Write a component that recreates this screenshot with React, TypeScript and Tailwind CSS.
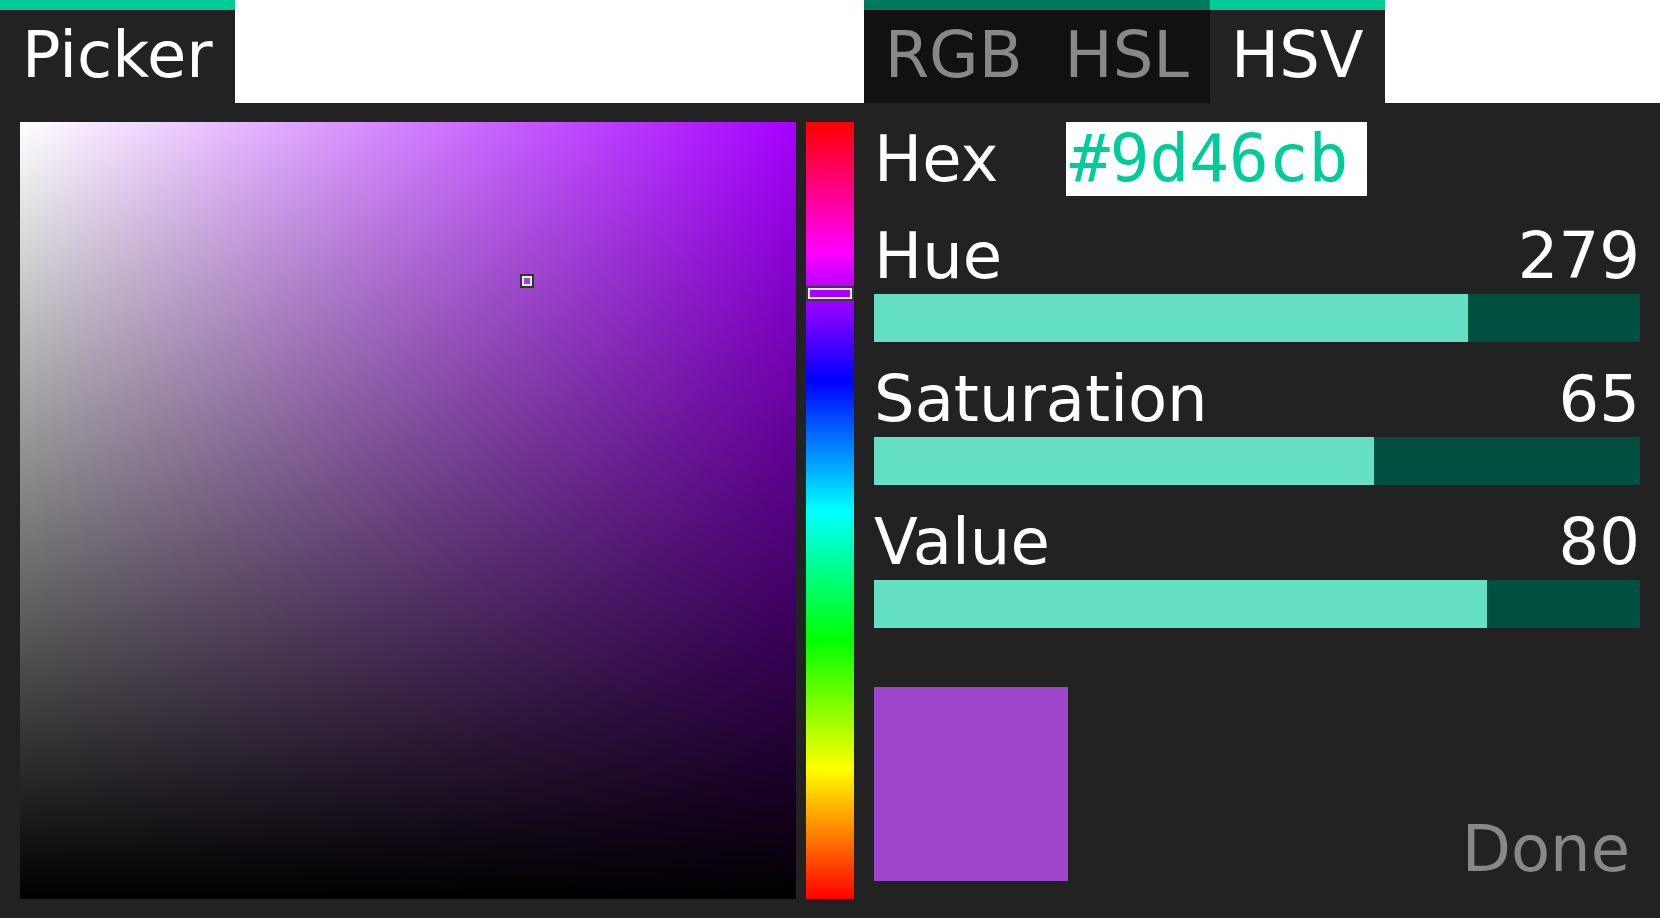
import React from "react";

const font = { fontFamily: '"DejaVu Sans", sans-serif' };
const mono = { fontFamily: '"DejaVu Sans Mono", monospace' };

function Slider({ label, value, pct }: { label: string; value: string; pct: number }) {
  return (
    <div className="flex flex-col">
      <div className="flex h-[75px] items-start justify-between leading-[75px] text-white">
        <span>{label}</span>
        <span>{value}</span>
      </div>
      <div className="h-[48px] w-full bg-[#00503f]">
        <div className="h-full bg-[#66e0c4]" style={{ width: `${pct * 100}%` }} />
      </div>
    </div>
  );
}

function Tab({ label, active, bar, wide }: { label: string; active: boolean; bar: string; wide?: boolean }) {
  return (
    <div className={"flex flex-col " + (active ? "bg-[#222222]" : "bg-[#111111]")}>
      <div className={"h-[10px] " + bar} />
      <div
        className={
          "flex flex-1 items-center pb-[3px] leading-[75px] " +
          (wide ? "px-[22px] " : "px-[21px] ") +
          (active ? "text-white" : "text-[#888888]")
        }
      >
        {label}
      </div>
    </div>
  );
}

export default function App() {
  return (
    <div className="flex h-[918px] w-[1660px] flex-col bg-white text-[64px]" style={font}>
      {/* tab strip */}
      <div className="flex h-[103px] shrink-0">
        <Tab label="Picker" active bar="bg-[#00cc99]" wide />
        <div className="ml-[629px] flex">
          <Tab label="RGB" active={false} bar="bg-[#007a5e]" />
          <Tab label="HSL" active={false} bar="bg-[#007a5e]" />
          <Tab label="HSV" active bar="bg-[#00cc99]" />
        </div>
      </div>

      {/* body */}
      <div className="flex flex-1 bg-[#222222] px-[20px] py-[19px]">
        {/* SV square */}
        <div className="relative h-[777px] w-[776px] bg-[linear-gradient(to_right,#ffffff,#a600ff)]">
          <div className="absolute inset-0 bg-[linear-gradient(to_top,#000000,rgba(0,0,0,0))]" />
          <div className="absolute left-[500px] top-[152px] h-[14px] w-[14px] border-2 border-[#333333]">
            <div className="h-full w-full border-2 border-[#e8e8e8] bg-[#9d46cb]" />
          </div>
        </div>

        {/* hue bar */}
        <div className="relative ml-[10px] h-[777px] w-[48px] bg-[linear-gradient(to_bottom,#ff0000,#ff00ff,#0000ff,#00ffff,#00ff00,#ffff00,#ff0000)]">
          <div className="absolute left-0 right-0 top-[164px] h-[15px] border-2 border-[#3a3a3a]">
            <div className="h-full w-full border-2 border-[#e6e6e6] bg-[#a600ff]" />
          </div>
        </div>

        {/* right panel */}
        <div className="ml-[20px] flex flex-1 flex-col">
          <div className="flex h-[74px] items-center">
            <span className="w-[192px] text-white leading-[74px]">Hex</span>
            <input
              readOnly
              value="#9d46cb"
              className="h-[74px] w-[301px] bg-white pl-[4px] text-[66px] leading-[74px] text-[#00cc99] outline-none"
              style={mono}
            />
          </div>
          <div className="mt-[23px]">
            <Slider label="Hue" value="279" pct={279 / 360} />
          </div>
          <div className="mt-[20px]">
            <Slider label="Saturation" value="65" pct={0.653} />
          </div>
          <div className="mt-[20px]">
            <Slider label="Value" value="80" pct={0.8} />
          </div>
          <div className="mt-[59px] flex h-[194px] items-end justify-between">
            <div className="h-[194px] w-[194px] bg-[#9d46cb]" />
            <span className="pr-[10px] leading-[64px] text-[#888888]">Done</span>
          </div>
        </div>
      </div>
    </div>
  );
}
